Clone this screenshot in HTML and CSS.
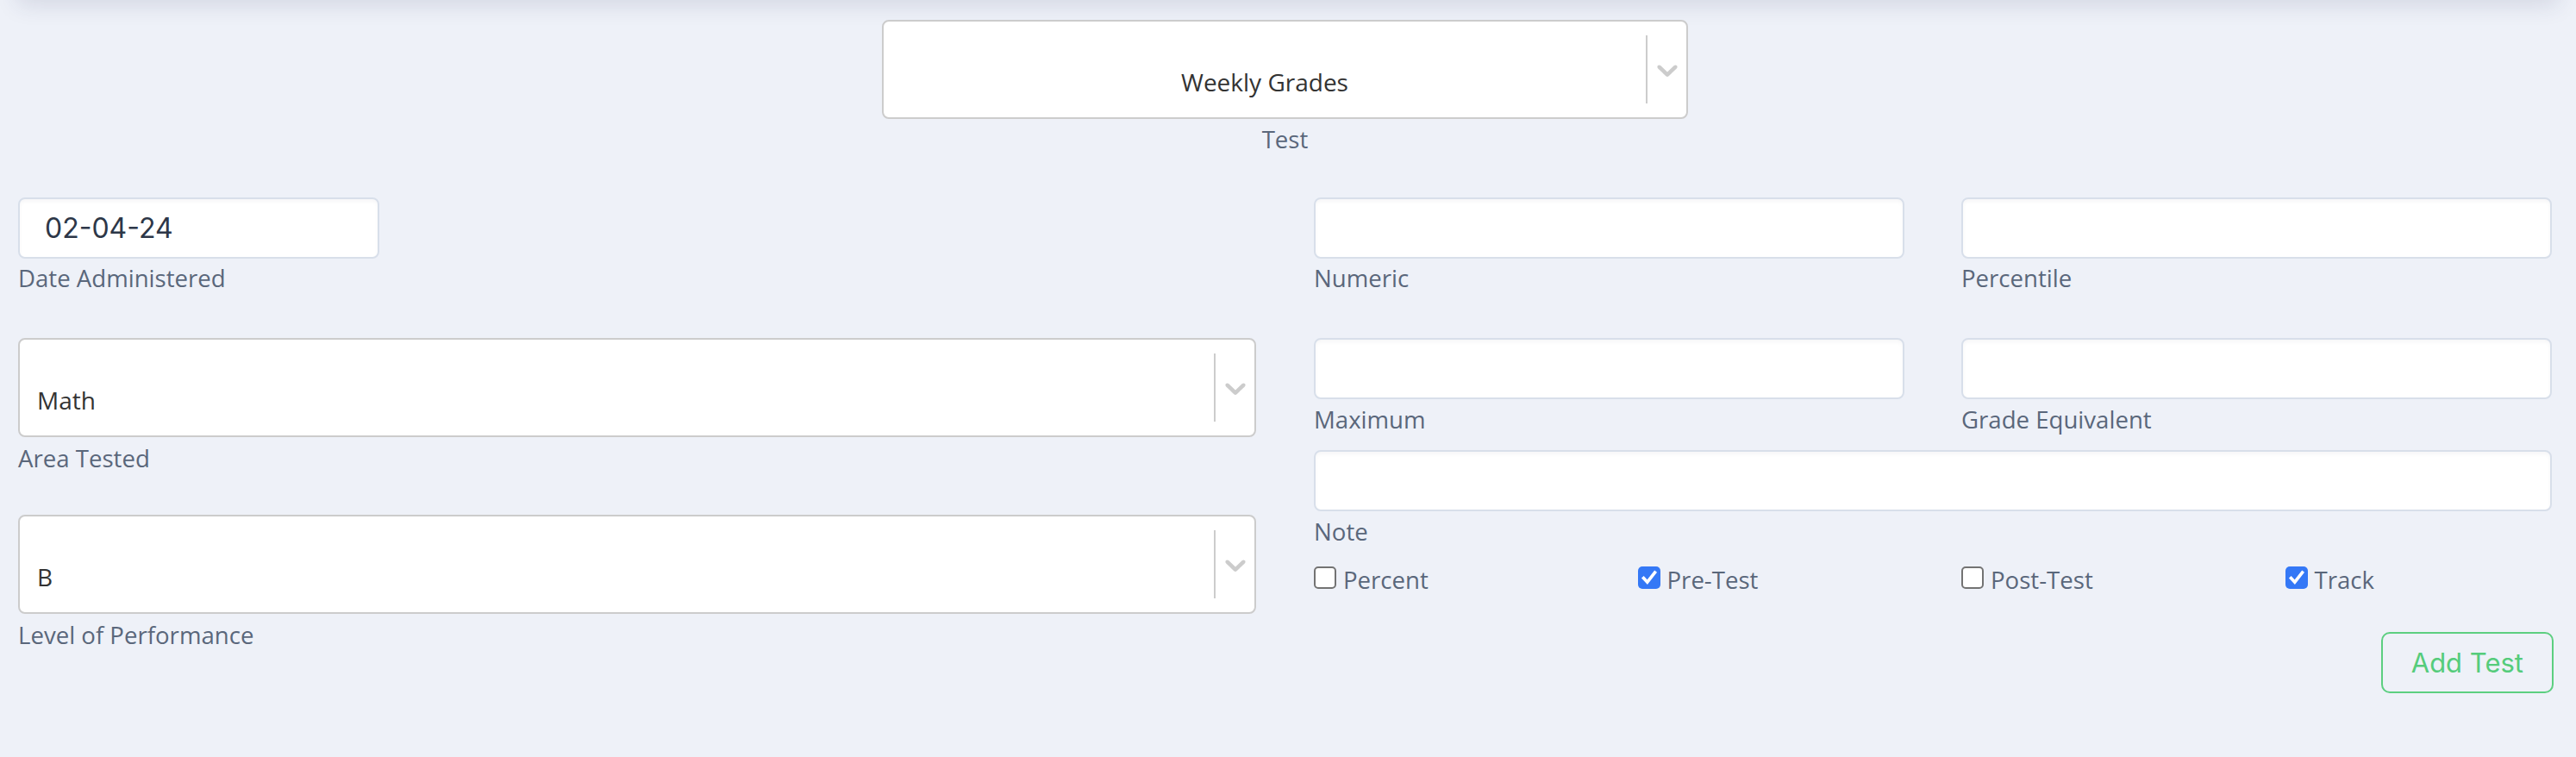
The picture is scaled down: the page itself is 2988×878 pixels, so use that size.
FILE: index.html
```html
<!DOCTYPE html>
<html lang="en">
<head>
<meta charset="utf-8">
<title>Add Test</title>
<link rel="stylesheet" href="styles.css">
</head>
<body>
<div class="topbar"></div>
<main class="form">
  <div class="test-field">
    <div class="select">
      <div class="select-value select-value-center"><span>Weekly Grades</span></div>
      <span class="select-sep"></span>
      <span class="select-ind"><svg width="40" height="40" viewBox="0 0 20 20"><path fill="#cccccc" d="M4.516 7.548c0.436-0.446 1.043-0.481 1.576 0l3.908 3.747 3.908-3.747c0.533-0.481 1.141-0.446 1.574 0 0.436 0.445 0.408 1.197 0 1.615-0.406 0.418-4.695 4.502-4.695 4.502-0.217 0.223-0.502 0.335-0.787 0.335s-0.57-0.112-0.789-0.335c0 0-4.287-4.084-4.695-4.502s-0.436-1.17 0-1.615z"/></svg></span>
    </div>
    <div class="label label-center">Test</div>
  </div>

  <div class="columns">
    <div class="col">
      <div class="field field-gap">
        <input class="input input-date" type="text" value="02-04-24">
        <div class="label">Date Administered</div>
      </div>
      <div class="field field-gap-sm">
        <div class="select">
          <div class="select-value"><span>Math</span></div>
          <span class="select-sep"></span>
          <span class="select-ind"><svg width="40" height="40" viewBox="0 0 20 20"><path fill="#cccccc" d="M4.516 7.548c0.436-0.446 1.043-0.481 1.576 0l3.908 3.747 3.908-3.747c0.533-0.481 1.141-0.446 1.574 0 0.436 0.445 0.408 1.197 0 1.615-0.406 0.418-4.695 4.502-4.695 4.502-0.217 0.223-0.502 0.335-0.787 0.335s-0.57-0.112-0.789-0.335c0 0-4.287-4.084-4.695-4.502s-0.436-1.17 0-1.615z"/></svg></span>
        </div>
        <div class="label label-sel">Area Tested</div>
      </div>
      <div class="field">
        <div class="select">
          <div class="select-value"><span>B</span></div>
          <span class="select-sep"></span>
          <span class="select-ind"><svg width="40" height="40" viewBox="0 0 20 20"><path fill="#cccccc" d="M4.516 7.548c0.436-0.446 1.043-0.481 1.576 0l3.908 3.747 3.908-3.747c0.533-0.481 1.141-0.446 1.574 0 0.436 0.445 0.408 1.197 0 1.615-0.406 0.418-4.695 4.502-4.695 4.502-0.217 0.223-0.502 0.335-0.787 0.335s-0.57-0.112-0.789-0.335c0 0-4.287-4.084-4.695-4.502s-0.436-1.17 0-1.615z"/></svg></span>
        </div>
        <div class="label label-sel">Level of Performance</div>
      </div>
    </div>

    <div class="col">
      <div class="pair field-gap">
        <div class="field">
          <input class="input" type="text">
          <div class="label">Numeric</div>
        </div>
        <div class="field">
          <input class="input" type="text">
          <div class="label">Percentile</div>
        </div>
      </div>
      <div class="pair field-gap-xs">
        <div class="field">
          <input class="input" type="text">
          <div class="label label-tight">Maximum</div>
        </div>
        <div class="field">
          <input class="input" type="text">
          <div class="label label-tight">Grade Equivalent</div>
        </div>
      </div>
      <div class="field field-gap-xs">
        <input class="input" type="text">
        <div class="label label-tight">Note</div>
      </div>
      <div class="checks">
        <label class="check"><span class="box"></span><span>Percent</span></label>
        <label class="check"><span class="box box-on"><svg width="26" height="26" viewBox="0 0 26 26"><path d="M6.5 13.5 L10.8 18.2 L19.5 7" fill="none" stroke="#ffffff" stroke-width="3.6" stroke-linecap="square" stroke-linejoin="miter"/></svg></span><span>Pre-Test</span></label>
        <label class="check"><span class="box"></span><span>Post-Test</span></label>
        <label class="check"><span class="box box-on"><svg width="26" height="26" viewBox="0 0 26 26"><path d="M6.5 13.5 L10.8 18.2 L19.5 7" fill="none" stroke="#ffffff" stroke-width="3.6" stroke-linecap="square" stroke-linejoin="miter"/></svg></span><span>Track</span></label>
      </div>
      <div class="actions">
        <button class="btn-add" type="button">Add Test</button>
      </div>
    </div>
  </div>
</main>
</body>
</html>
```

FILE: styles.css
```css
* { box-sizing: border-box; }

html, body {
  margin: 0;
  padding: 0;
  background: #eef1f8;
}

body {
  font-family: "Open Sans", "Noto Sans", sans-serif;
  font-size: 28px;
  color: #333333;
}

.topbar {
  height: 40px;
  margin: -40px 20px 0;
  background: #ffffff;
  box-shadow: 0 6px 26px rgba(40, 50, 90, 0.13);
}

.form {
  padding: 23px 28px 0 21px;
}

.test-field {
  width: 935px;
  margin: 0 auto;
}

.select {
  display: flex;
  align-items: stretch;
  height: 115px;
  background: #ffffff;
  border: 2px solid #cccccc;
  border-radius: 8px;
}

.select-value {
  flex: 1;
  display: flex;
  align-items: center;
  padding: 28px 16px 0 20px;
  color: #333333;
  line-height: 38px;
  min-width: 0;
}

.select-value-center {
  justify-content: center;
  padding-left: 16px;
}

.select-sep {
  width: 2px;
  margin: 16px 0;
  background: #cccccc;
}

.select-ind {
  width: 45px;
  display: flex;
  align-items: center;
  justify-content: center;
}

.label {
  margin-top: 3px;
  line-height: 38px;
  color: #5a677b;
  font-size: 27.6px;
}

.label-center { text-align: center; margin-top: 4px; }
.label-sel { margin-top: 5px; }
.label-tight { margin-top: 4px; }

.columns {
  display: grid;
  grid-template-columns: 1fr 1fr;
  column-gap: 67px;
  margin-top: 49px;
}

.col {
  display: flex;
  flex-direction: column;
}

.field { display: flex; flex-direction: column; }
.field-gap { margin-bottom: 51px; }
.field-gap-sm { margin-bottom: 47px; }
.field-gap-xs { margin-bottom: 17px; }

.pair {
  display: grid;
  grid-template-columns: 1fr 1fr;
  column-gap: 66px;
}

.input {
  display: block;
  width: 100%;
  height: 71px;
  margin: 0;
  padding: 0 29px;
  background: #ffffff;
  border: 2px solid #d8dfea;
  border-radius: 8px;
  box-shadow: inset 0 3px 4px rgba(30, 40, 70, 0.035);
  font-family: "Inter", "Liberation Sans", sans-serif;
  font-size: 32px;
  color: #2d3748;
  outline: none;
}

.input-date {
  width: 419px;
}

.checks {
  display: grid;
  grid-template-columns: repeat(4, 1fr);
  column-gap: 66px;
  margin-top: 1px;
}

.check {
  display: flex;
  align-items: center;
  line-height: 38px;
  color: #5a677b;
  font-size: 27.6px;
}

.box {
  width: 26px;
  height: 26px;
  margin-right: 8px;
  margin-bottom: 4px;
  border: 2.5px solid #737373;
  border-radius: 5px;
  background: #ffffff;
  flex: none;
  display: flex;
}

.box-on {
  border: none;
  background: #3478f6;
}

.box svg { display: block; }

.actions {
  display: flex;
  justify-content: flex-end;
  margin-top: 42px;
}

.btn-add {
  height: 71px;
  padding: 0 33px;
  margin-right: -2px;
  background: transparent;
  border: 2.5px solid #5ccf80;
  border-radius: 10px;
  color: #55cc7b;
  font-family: "Inter", "Liberation Sans", sans-serif;
  font-size: 31px;
  cursor: pointer;
}
```
